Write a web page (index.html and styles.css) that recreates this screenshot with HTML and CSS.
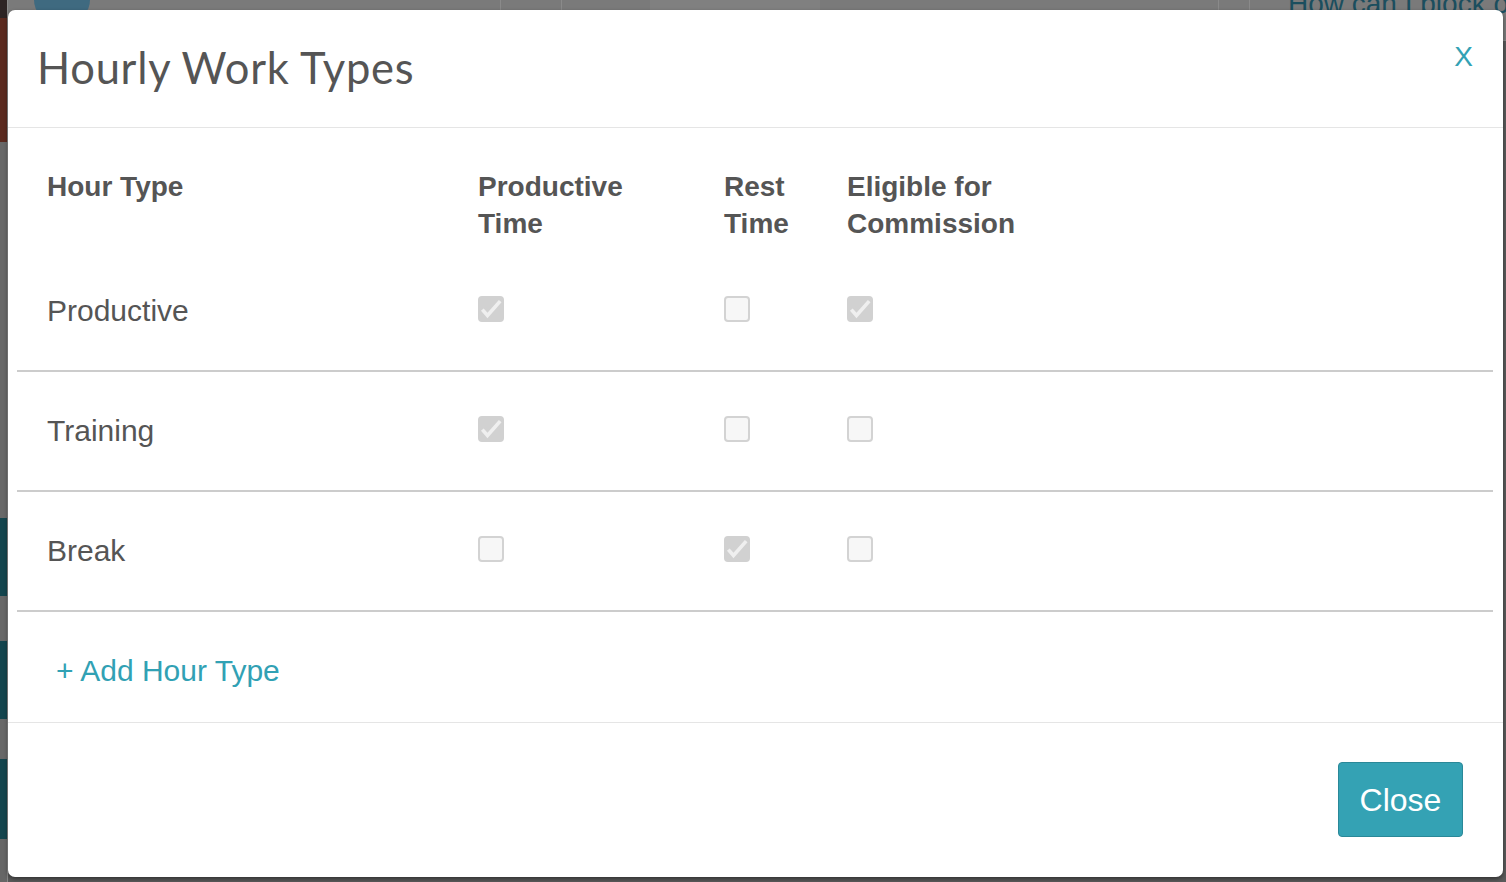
FILE: index.html
```html
<!DOCTYPE html>
<html lang="en">
<head>
<meta charset="utf-8">
<title>Hourly Work Types</title>
<link rel="stylesheet" href="styles.css">
</head>
<body>
<div class="page">
  <div class="page-top">
    <span class="top-avatar"></span>
    <span class="top-sep sep-a"></span>
    <span class="top-sep sep-b"></span>
    <span class="top-light"></span>
    <span class="top-sep sep-c"></span>
    <span class="top-sep sep-d"></span>
    <span class="help-link">How can I block out time?</span>
  </div>
  <div class="page-side">
    <span class="side-dark"></span>
    <span class="side-red"></span>
    <span class="side-gap g1"></span>
    <span class="side-teal"></span>
    <span class="side-gap g2"></span>
    <span class="side-teal"></span>
    <span class="side-gap g3"></span>
    <span class="side-teal t3"></span>
  </div>
</div>

<div class="modal" role="dialog" aria-labelledby="modal-title">
  <div class="modal-header">
    <h2 class="modal-title" id="modal-title">Hourly Work Types</h2>
    <button class="modal-x" type="button" aria-label="Close">X</button>
  </div>

  <div class="modal-body">
    <div class="types">
      <div class="types-row types-head">
        <div class="cell">Hour Type</div>
        <div class="cell">Productive<br>Time</div>
        <div class="cell">Rest<br>Time</div>
        <div class="cell">Eligible for<br>Commission</div>
      </div>

      <div class="types-row">
        <div class="cell name">Productive</div>
        <div class="cell"><span class="cb checked"><svg viewBox="0 0 26 26"><polyline points="5.5,15 9.5,19.5 21,6.5"/></svg></span></div>
        <div class="cell"><span class="cb"></span></div>
        <div class="cell"><span class="cb checked"><svg viewBox="0 0 26 26"><polyline points="5.5,15 9.5,19.5 21,6.5"/></svg></span></div>
      </div>

      <div class="types-row">
        <div class="cell name">Training</div>
        <div class="cell"><span class="cb checked"><svg viewBox="0 0 26 26"><polyline points="5.5,15 9.5,19.5 21,6.5"/></svg></span></div>
        <div class="cell"><span class="cb"></span></div>
        <div class="cell"><span class="cb"></span></div>
      </div>

      <div class="types-row">
        <div class="cell name">Break</div>
        <div class="cell"><span class="cb"></span></div>
        <div class="cell"><span class="cb checked"><svg viewBox="0 0 26 26"><polyline points="5.5,15 9.5,19.5 21,6.5"/></svg></span></div>
        <div class="cell"><span class="cb"></span></div>
      </div>
    </div>

    <div class="add-row">
      <a class="add-link" href="#">+ Add Hour Type</a>
    </div>
  </div>

  <div class="modal-footer">
    <button class="btn-close" type="button">Close</button>
  </div>
</div>
</body>
</html>
```

FILE: styles.css
```css
html, body {
  margin: 0;
  padding: 0;
}

body {
  width: 1506px;
  height: 882px;
  overflow: hidden;
  background: #5a5a5a;
  font-family: "Liberation Sans", Arial, sans-serif;
  position: relative;
}

/* ---------- dimmed page behind the dialog ---------- */
.page {
  display: grid;
  grid-template-rows: 40px 1fr;
  height: 882px;
}

.page-top {
  display: flex;
  align-items: flex-start;
  background: #7a7a7a;
  border-bottom: 1px solid #888;
  height: 40px;
}

.top-avatar {
  width: 56px;
  height: 22px;
  margin-left: 34px;
  border-radius: 0 0 30px 30px;
  background: #3f6a80;
}

.top-sep {
  width: 1px;
  height: 40px;
  background: #8a8a8a;
}
.sep-a { margin-left: 410px; }
.sep-b { margin-left: 60px; }
.sep-c { margin-left: 398px; }
.sep-d { margin-left: 30px; }

.top-light {
  width: 170px;
  height: 40px;
  margin-left: 88px;
  background: #808080;
}

.help-link {
  margin-left: 38px;
  margin-top: -10px;
  font-size: 28px;
  line-height: 28px;
  color: #1b4e5e;
  white-space: nowrap;
}

.page-side {
  display: flex;
  flex-direction: column;
  width: 7px;
  border-right: 1px solid #8a8a8a;
  background: #666;
  margin-top: -40px;
}

.side-dark { height: 18px; background: #2d2424; }
.side-red { height: 124px; background: #5b2a1f; }
.side-gap { background: #686868; }
.g1 { height: 376px; }
.g2 { height: 45px; }
.g3 { height: 40px; }
.side-teal { height: 78px; background: #14454e; }
.t3 { height: 80px; }

/* ---------- dialog ---------- */
.modal {
  position: absolute;
  left: 8px;
  top: 10px;
  width: 1495px;
  height: 867px;
  background: #fff;
  border-radius: 7px;
  box-shadow: 0 2px 4px rgba(0, 0, 0, 0.45);
  display: flex;
  flex-direction: column;
  color: #555;
}

.modal-header {
  height: 117px;
  border-bottom: 1px solid #e5e5e5;
  display: flex;
  align-items: center;
  justify-content: space-between;
  padding: 0 30px 0 29px;
}

.modal-title {
  margin: 0 0 4px;
  font-family: "Lato", "Liberation Sans", sans-serif;
  font-weight: 400;
  font-size: 43.5px;
  line-height: 50px;
  color: #555;
  letter-spacing: 0.72px;
}

.modal-x {
  border: 0;
  background: none;
  padding: 0;
  margin: 0 0 24px;
  font-family: "Liberation Sans", Arial, sans-serif;
  font-size: 28px;
  line-height: 30px;
  color: #33a2b5;
  cursor: pointer;
}

.modal-body {
  padding: 1px 10px 0 9px;
}

.types-row {
  display: grid;
  grid-template-columns: 431px 246px 123px 1fr;
  padding-left: 30px;
  height: 118px;
  align-items: center;
  border-bottom: 2px solid #cccccc;
}

.types-head {
  height: auto;
  align-items: start;
  padding-top: 39px;
  padding-bottom: 10px;
  border-bottom: 0;
  font-weight: 700;
  font-size: 28px;
  line-height: 37px;
}

.name {
  font-size: 30px;
  line-height: 34px;
}

.cb {
  display: block;
  box-sizing: border-box;
  width: 26px;
  height: 26px;
  margin-left: 0;
  margin-top: -5px;
  border-radius: 4px;
  background: #f7f7f7;
  border: 2px solid #d3d3d3;
}

.cb.checked {
  background: #d1d1d1;
  border: 0;
}

.cb svg {
  display: block;
  width: 26px;
  height: 26px;
}

.cb polyline {
  fill: none;
  stroke: #efefef;
  stroke-width: 3.6;
  stroke-linecap: square;
}

.add-row {
  padding: 44px 0 36px 39px;
}

.add-link {
  font-size: 30px;
  line-height: 30px;
  color: #31a1b4;
  text-decoration: none;
  display: block;
}

.modal-footer {
  border-top: 1px solid #e5e5e5;
  flex: 1;
  display: flex;
  justify-content: flex-end;
  align-items: flex-start;
  padding: 39px 40px 0 0;
}

.btn-close {
  width: 125px;
  height: 75px;
  border: 1px solid #2a8898;
  border-radius: 4px;
  background: #34a2b4;
  color: #fff;
  font-family: "Liberation Sans", Arial, sans-serif;
  font-size: 32px;
  padding: 2px 0 0;
  cursor: pointer;
}
```
